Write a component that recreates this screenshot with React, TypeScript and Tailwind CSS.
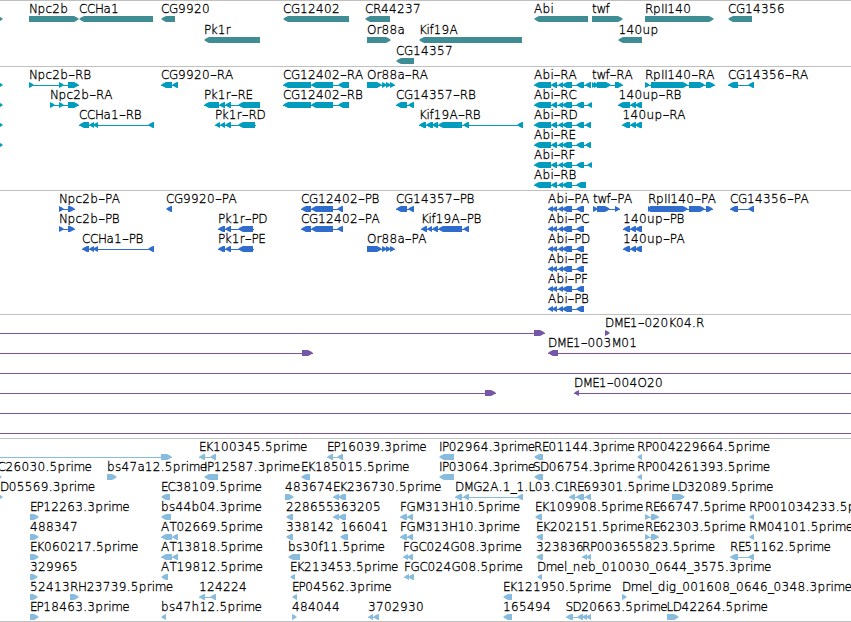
type Feature = {
  row: number;
  dir: "<" | ">";
  name: string;
  // start/end pairs, one pair per exon
  exons: number[];
  labelX?: number;
};

type TrackProps = {
  color: string;
  height: number;
  pitch?: number;
  features: Feature[];
};

const f = (
  row: number,
  dir: "<" | ">",
  name: string,
  exons: number[],
  labelX?: number
): Feature => ({ row, dir, name, exons, labelX });

// Horizontal advance of each label character, 8 when not listed
const ADVANCE: Record<string, number> = {
  A: 8.5, B: 7.7, D: 8.7, E: 6.5, F: 6.5, G: 9, H: 8.6, I: 3.1, K: 7.4, L: 6.3,
  M: 9.6, N: 8.6, O: 9.5, P: 6.7, R: 8.1, S: 7, T: 7,
  a: 7.3, c: 6.7, e: 7.4, f: 4, i: 3, k: 7, l: 3, m: 11, r: 5, s: 6.5, t: 4.5, w: 9,
  "-": 6.8, ".": 4, _: 5.6,
};

function glyphPositions(text: string, start: number) {
  const positions: number[] = [];
  let x = start;
  for (const ch of text) {
    positions.push(Number(x.toFixed(1)));
    x += ADVANCE[ch] ?? 8;
  }
  return positions;
}

const GENES: Feature[] = [
  f(0, ">", "", [-20, 3]),
  f(0, ">", "Npc2b", [29, 79]),
  f(0, "<", "CCHa1", [79, 153]),
  f(0, "<", "CG9920", [161, 175]),
  f(0, "<", "CG12402", [283, 349]),
  f(0, "<", "CR44237", [365, 390]),
  f(0, "<", "Abi", [534, 588]),
  f(0, ">", "twf", [592, 623]),
  f(0, ">", "RpII140", [645, 714]),
  f(0, "<", "CG14356", [728, 752]),
  f(1, "<", "Pk1r", [204, 260]),
  f(1, ">", "Or88a", [367, 391]),
  f(1, "<", "Kif19A", [419, 522]),
  f(1, "<", "140up", [618, 642], 618.6),
  f(2, "<", "CG14357", [396, 414]),
];

const OR88A = [367, 382, 382, 387, 386, 391, 390, 395];
const CG12402_R = [283, 311, 311, 333, 338, 349];
const CG12402_P = [301, 311, 311, 333, 337, 343];
const ABI_R = [534, 551, 551, 557, 558, 563, 562, 572, 576, 584];
const ABI_P = [548, 553, 552, 557, 558, 563, 562, 572, 576, 584];
const NPC2B_P = [59, 64, 68, 75];
const PK1R_P = [218, 225, 225, 231, 238, 253, 253, 254];

const TRANSCRIPTS: Feature[] = [
  f(0, ">", "", [-20, 3]),
  f(1, ">", "", [-20, 3]),
  f(2, ">", "", [-20, 3]),
  f(3, ">", "", [-20, 3]),
  f(0, ">", "Npc2b-RB", [29, 34, 59, 64, 68, 79]),
  f(0, "<", "CG9920-RA", [161, 172, 172, 178]),
  f(0, "<", "CG12402-RA", CG12402_R),
  f(0, ">", "Or88a-RA", OR88A),
  f(0, "<", "Abi-RA", [...ABI_R, 585, 591]),
  f(0, ">", "twf-RA", [592, 596, 594, 599, 597, 611, 615, 623]),
  f(0, ">", "RpII140-RA", [645, 650, 651, 688, 689, 705, 706, 715]),
  f(0, "<", "CG14356-RA", [728, 738, 748, 754]),
  f(1, ">", "Npc2b-RA", [50, 55, 59, 64, 68, 79]),
  f(1, "<", "Pk1r-RE", [204, 219, 219, 225, 225, 231, 238, 260]),
  f(1, "<", "CG12402-RB", CG12402_R),
  f(1, "<", "CG14357-RB", [396, 407, 408, 414]),
  f(1, "<", "Abi-RC", [...ABI_R, 587, 592]),
  f(1, "<", "140up-RB", [618, 630, 630, 636, 635, 642], 618.6),
  f(2, "<", "CCHa1-RB", [79, 89, 89, 94, 93, 98, 148, 154]),
  f(2, "<", "Pk1r-RD", [215, 220, 220, 225, 225, 231, 238, 255, 255, 256]),
  f(2, "<", "Kif19A-RB", [419, 426, 426, 433, 432, 438, 438, 462, 463, 469, 517, 523]),
  f(2, "<", "Abi-RD", [...ABI_R, 585, 591]),
  f(2, "<", "140up-RA", [622, 630, 630, 636, 635, 642], 622.4),
  f(3, "<", "Abi-RE", [...ABI_R, 585, 591]),
  f(4, "<", "Abi-RF", [...ABI_R, 587, 592]),
  f(5, "<", "Abi-RB", [534, 551, 551, 557, 558, 563, 562, 572, 576, 586]),
];

const PROTEINS: Feature[] = [
  f(0, ">", "Npc2b-PA", NPC2B_P),
  f(0, "<", "CG9920-PA", [166, 172]),
  f(0, "<", "CG12402-PB", CG12402_P),
  f(0, "<", "CG14357-PB", [396, 407, 408, 414]),
  f(0, "<", "Abi-PA", ABI_P),
  f(0, ">", "twf-PA", [593, 598, 597, 610, 615, 620]),
  f(0, ">", "RpII140-PA", [648, 652, 650, 688, 689, 705, 706, 713]),
  f(0, "<", "CG14356-PA", [730, 738, 748, 754]),
  f(1, ">", "Npc2b-PB", NPC2B_P),
  f(1, "<", "Pk1r-PD", PK1R_P),
  f(1, "<", "CG12402-PA", CG12402_P),
  f(1, "<", "Kif19A-PB", [421, 427, 427, 432, 432, 438, 438, 462, 463, 469]),
  f(1, "<", "Abi-PC", ABI_P),
  f(1, "<", "140up-PB", [623, 630, 630, 636, 635, 642]),
  f(2, "<", "CCHa1-PB", [82, 89, 89, 94, 93, 98, 148, 154]),
  f(2, "<", "Pk1r-PE", PK1R_P),
  f(2, ">", "Or88a-PA", OR88A),
  f(2, "<", "Abi-PD", ABI_P),
  f(2, "<", "140up-PA", [623, 630, 630, 636, 635, 642]),
  f(3, "<", "Abi-PE", ABI_P),
  f(4, "<", "Abi-PF", ABI_P),
  f(5, "<", "Abi-PB", ABI_P),
];

const CLONES: Feature[] = [
  f(0, ">", "", [-60, -50, 534, 545]),
  f(0, ">", "DME1-020K04.R", [605, 610]),
  f(1, ">", "", [-60, -50, 302, 313]),
  f(1, "<", "DME1-003M01", [548, 558, 900, 910]),
  f(2, ">", "", [-60, -50, 900, 910]),
  f(3, ">", "", [-60, -50, 485, 496]),
  f(3, "<", "DME1-004O20", [574, 579, 900, 910]),
  f(4, ">", "", [-60, -50, 900, 910]),
  f(5, ">", "", [-60, -50, 900, 910]),
];

const ESTS: Feature[] = [
  f(0, ">", "", [-60, -50, 161, 172]),
  f(0, "<", "EK100345.5prime", [199, 205, 210, 216]),
  f(0, "<", "EP16039.3prime", [327, 333, 337, 343]),
  f(0, "<", "IP02964.3prime", [439, 454]),
  f(0, "<", "RE01144.3prime", [534, 543]),
  f(0, "<", "RP004229664.5prime", [637, 642]),
  f(1, ">", "C26030.5prime", [-20, 2], -2.5),
  f(1, ">", "bs47a12.5prime", [107, 117]),
  f(1, "<", "IP12587.3prime", [204, 218]),
  f(1, "<", "EK185015.5prime", [301, 310]),
  f(1, "<", "IP03064.3prime", [439, 454]),
  f(1, "<", "SD06754.3prime", [534, 543], 533),
  f(1, "<", "RP004261393.5prime", [637, 642]),
  f(2, ">", "D05569.3prime", [-20, 3], 0),
  f(2, "<", "EC38109.5prime", [161, 170]),
  f(2, ">", "483674", [285, 294]),
  f(2, "<", "EK236730.5prime", [333, 339, 338, 346]),
  f(2, "<", "DMG2A.1_1.L03.C1", [455, 462, 463, 469, 517, 523]),
  f(2, "<", "RE69301.5prime", [569, 575, 576, 584, 585, 591]),
  f(2, ">", "LD32089.5prime", [672, 685]),
  f(3, ">", "EP12263.3prime", [30, 39]),
  f(3, "<", "bs44b04.3prime", [161, 171]),
  f(3, "<", "228655", [286, 293]),
  f(3, "<", "363205", [333, 339, 338, 346]),
  f(3, "<", "FGM313H10.5prime", [400, 407, 407, 413]),
  f(3, "<", "EK109908.5prime", [535, 542]),
  f(3, ">", "RE66747.5prime", [645, 650, 651, 659]),
  f(3, "<", "RP001034233.5prime", [749, 754]),
  f(4, ">", "488347", [30, 39]),
  f(4, "<", "AT02669.5prime", [161, 172, 172, 178]),
  f(4, "<", "338142", [286, 293]),
  f(4, "<", "166041", [340, 348], 340.6),
  f(4, "<", "FGM313H10.3prime", [400, 407, 407, 413]),
  f(4, "<", "EK202151.5prime", [536, 543]),
  f(4, ">", "RE62303.5prime", [645, 650, 651, 659]),
  f(4, "<", "RM04101.5prime", [749, 754]),
  f(5, ">", "EK060217.5prime", [30, 39]),
  f(5, "<", "AT13818.5prime", [161, 172, 172, 178]),
  f(5, "<", "bs30f11.5prime", [288, 300]),
  f(5, "<", "FGC024G08.3prime", [403, 408, 407, 413]),
  f(5, "<", "323836", [536, 543]),
  f(5, "<", "RP003655823.5prime", [582, 587, 586, 591]),
  f(5, "<", "RE51162.5prime", [730, 738, 748, 754]),
  f(6, ">", "329965", [30, 38]),
  f(6, "<", "AT19812.5prime", [161, 168]),
  f(6, "<", "EK213453.5prime", [290, 295]),
  f(6, "<", "FGC024G08.5prime", [404, 409, 408, 414]),
  f(6, "<", "Dmel_neb_010030_0644_3575.3prime", [537, 542]),
  f(7, ">", "52413", [30, 38]),
  f(7, ">", "RH23739.5prime", [70, 79]),
  f(7, "<", "124224", [199, 205, 210, 216]),
  f(7, "<", "EP04562.3prime", [292, 297]),
  f(7, "<", "EK121950.5prime", [503, 512]),
  f(7, ">", "Dmel_dig_001608_0646_0348.3prime", [622, 627]),
  f(8, ">", "EP18463.3prime", [30, 39]),
  f(8, "<", "bs47h12.5prime", [161, 166]),
  f(8, ">", "484044", [292, 297]),
  f(8, "<", "3702930", [368, 373, 373, 379]),
  f(8, "<", "165494", [503, 512]),
  f(8, "<", "SD20663.5prime", [566, 573, 577, 583, 582, 587, 586, 591], 565.5),
  f(8, ">", "LD42264.5prime", [667, 679], 666.5),
];

function exonPoints(a: number, b: number, dir: "<" | ">", y: number) {
  // single pixel stubs are the flat end of an exon
  if (b - a <= 1) {
    return `${a},${y + 3} ${b},${y + 3} ${b},${y + 4} ${a},${y + 4}`;
  }
  const head = Math.min(5, b - a);
  const mid = head / 2;
  if (dir === "<") {
    return `${a},${y + 3} ${a + mid},${y + 1.2} ${a + head},${y} ${b},${y} ${b},${y + 6} ${a + head},${y + 6} ${a + mid},${y + 4.8}`;
  }
  return `${a},${y} ${b - head},${y} ${b - mid},${y + 1.2} ${b},${y + 3} ${b - mid},${y + 4.8} ${b - head},${y + 6} ${a},${y + 6}`;
}

function Label({ name, x, y }: { name: string; x: number; y: number }) {
  const positions = glyphPositions(name, x);
  const dash = name.indexOf("-");
  return (
    <text
      y={y}
      className="fill-black stroke-black stroke-[0.3px] font-['DejaVu_Sans',sans-serif] text-[12px] font-extralight"
    >
      {dash < 0 ? (
        <tspan x={positions.join(" ")}>{name}</tspan>
      ) : (
        <>
          <tspan x={positions.slice(0, dash).join(" ")}>{name.slice(0, dash)}</tspan>
          {/* the dash is drawn wider than the font has it */}
          <tspan x={positions[dash]} textLength="7" lengthAdjust="spacingAndGlyphs">
            -
          </tspan>
          <tspan x={positions.slice(dash + 1).join(" ")}>{name.slice(dash + 1)}</tspan>
        </>
      )}
    </text>
  );
}

function Track({ color, height, pitch = 20, features }: TrackProps) {
  return (
    <section className="border-t border-[#c0c0c0]">
      <svg width="851" height={height - 1} className="block overflow-hidden">
        {features.map((feature, i) => {
          const { row, dir, name, exons, labelX } = feature;
          const y = row * pitch + 15;
          const start = exons[0];
          const end = exons[exons.length - 1];
          const pairs = [];
          for (let n = 0; n < exons.length; n += 2) {
            pairs.push([exons[n], exons[n + 1]]);
          }
          return (
            <g key={i}>
              {pairs.length > 1 && (
                <rect x={start} y={y + 3} width={end - start} height="1" fill={color} />
              )}
              {pairs.map(([a, b], n) => (
                <polygon key={n} points={exonPoints(a, b, dir, y)} fill={color} />
              ))}
              {name && <Label name={name} x={labelX ?? start} y={y - 3} />}
            </g>
          );
        })}
      </svg>
    </section>
  );
}

function App() {
  return (
    <main className="h-[622px] w-[851px] overflow-hidden bg-white">
      <Track color="#408c94" height={66} pitch={21} features={GENES} />
      <Track color="#009cbd" height={124} features={TRANSCRIPTS} />
      <Track color="#306ccc" height={124} features={PROTEINS} />
      <Track color="#7656a6" height={124} features={CLONES} />
      <Track color="#88bcde" height={183} features={ESTS} />
      <div className="border-t border-[#c0c0c0]" />
    </main>
  );
}

export default App;
